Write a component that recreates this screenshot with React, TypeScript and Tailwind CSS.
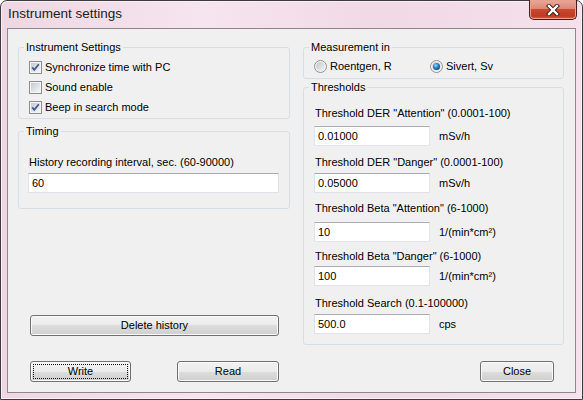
import { useId, type ReactNode } from "react";

function useSvgId() {
  return "g" + useId().replace(/[^a-zA-Z0-9]/g, "");
}

function CheckBox({ checked }: { checked?: boolean }) {
  const id = useSvgId();
  return (
    <svg width="13" height="13" viewBox="0 0 13 13" className="shrink-0">
      <defs>
        <linearGradient id={id} x1="0" y1="0" x2="1" y2="1">
          <stop offset="0" stopColor="#c6cad0" />
          <stop offset="1" stopColor="#f6f6f6" />
        </linearGradient>
      </defs>
      <rect x="0.5" y="0.5" width="12" height="12" fill="#f4f4f4" stroke="#8e8f8f" />
      <rect x="2" y="2" width="9" height="9" fill={`url(#${id})`} />
      {checked && (
        <path d="M3.2 6.3 5.3 8.8 9.8 3.2" fill="none" stroke="#44598f" strokeWidth="1.8" />
      )}
    </svg>
  );
}

function Radio({ checked }: { checked?: boolean }) {
  const id = useSvgId();
  return (
    <svg width="13" height="13" viewBox="0 0 13 13" className="shrink-0">
      <defs>
        <linearGradient id={id + "a"} x1="0" y1="0" x2="1" y2="1">
          <stop offset="0" stopColor="#c3c7cc" />
          <stop offset="1" stopColor="#f4f4f4" />
        </linearGradient>
        <radialGradient id={id + "b"} cx="0.4" cy="0.35" r="0.7">
          <stop offset="0" stopColor="#9fe0fb" />
          <stop offset="0.45" stopColor="#2c8fd0" />
          <stop offset="1" stopColor="#0d3f73" />
        </radialGradient>
      </defs>
      <circle cx="6.5" cy="6.5" r="6" fill="#f4f4f4" stroke="#8e8f8f" />
      <circle cx="6.5" cy="6.5" r="4.5" fill={`url(#${id}a)`} />
      {checked && <circle cx="6.5" cy="6.5" r="3.5" fill={`url(#${id}b)`} />}
    </svg>
  );
}

function Group({ title, className, children }: { title: string; className: string; children?: ReactNode }) {
  return (
    <fieldset className={"border border-[#d5dfe5] rounded-[3px] " + className}>
      <legend className="ml-[5px] px-[2px] leading-[13px]">{title}</legend>
      {children}
    </fieldset>
  );
}

function TextBox({ value, className }: { value: string; className: string }) {
  return (
    <div className={"h-[20px] bg-white border border-[#dfe2e8] border-t-[#abadb3] px-[3px] flex items-center " + className}>
      {value}
    </div>
  );
}

function WinButton({ label, className, focused }: { label: string; className: string; focused?: boolean }) {
  return (
    <div
      className={
        "h-[21px] rounded-[3px] border border-[#707070] p-[2px] bg-[linear-gradient(#f2f2f2_0%,#ebebeb_50%,#dddddd_50%,#cfcfcf_100%)] shadow-[inset_0_0_0_1px_#fbfbfb] " +
        className
      }
    >
      <div
        className={
          "h-full flex items-center justify-center border border-dotted " +
          (focused ? "border-[#111]" : "border-transparent")
        }
      >
        {label}
      </div>
    </div>
  );
}

const thresholds = [
  { label: 'Threshold DER "Attention" (0.0001-100)', value: "0.01000", unit: "mSv/h", lm: "mt-[13px]", im: "mt-[6px]" },
  { label: 'Threshold DER "Danger" (0.0001-100)', value: "0.05000", unit: "mSv/h", lm: "mt-[10px]", im: "mt-[4px]" },
  { label: 'Threshold Beta "Attention" (6-1000)', value: "10", unit: "1/(min*cm²)", lm: "mt-[9px]", im: "mt-[7px]" },
  { label: 'Threshold Beta "Danger" (6-1000)', value: "100", unit: "1/(min*cm²)", lm: "mt-[8px]", im: "mt-[3px]" },
  { label: "Threshold Search (0.1-100000)", value: "500.0", unit: "cps", lm: "mt-[11px]", im: "mt-[4px]" },
];

export default function App() {
  return (
    <div className="w-[583px] h-[400px] bg-white text-[11px] text-black font-['Liberation_Sans',Arial,sans-serif]">
      <div className="w-full h-full flex flex-col rounded-t-[7px] border border-[#3f3a3d] bg-[linear-gradient(90deg,#eed7e3,#f6e4ee_35%,#f1d9e6_65%,#f5e0ec)] shadow-[inset_0_0_0_1px_#fbeff6]">
        {/* title bar */}
        <div className="h-[27px] flex items-start">
          <div className="mt-[3px] ml-[7px] text-[13.5px] leading-[20px] text-[#1c1c1c]">Instrument settings</div>
          <div className="ml-auto mr-[5px] -mt-[1px] w-[48px] h-[20px] rounded-b-[5px] border border-t-0 border-[#4a1d14] bg-[linear-gradient(#eaa99a_0%,#de8775_45%,#c84830_50%,#c03a22_85%,#d8684e_100%)] flex items-center justify-center shadow-[inset_0_0_0_1px_#e9a08e]">
            <svg width="14" height="12" viewBox="0 0 14 12">
              <path d="M3 2 11 10M11 2 3 10" stroke="#3b1610" strokeWidth="4.2" strokeLinecap="square" />
              <path d="M3 2 11 10M11 2 3 10" stroke="#ffffff" strokeWidth="2.4" strokeLinecap="square" />
            </svg>
          </div>
        </div>

        {/* client area */}
        <div className="flex-1 mx-[6px] mb-[6px] border border-[#8f878c] bg-[#f0f0f0] pt-[12px] pl-[10px]">
          <div className="flex gap-[13px]">
            {/* left column */}
            <div className="w-[272px] flex flex-col">
              <Group title="Instrument Settings" className="h-[78px]">
                <div className="mt-[3px] pl-[10px]">
                  <div className="h-[20px] flex items-center gap-[3px]">
                    <CheckBox checked />
                    <span>Synchronize time with PC</span>
                  </div>
                  <div className="h-[20px] flex items-center gap-[3px]">
                    <CheckBox />
                    <span>Sound enable</span>
                  </div>
                  <div className="h-[20px] flex items-center gap-[3px]">
                    <CheckBox checked />
                    <span>Beep in search mode</span>
                  </div>
                </div>
              </Group>
              <Group title="Timing" className="mt-[6px] h-[84px]">
                <div className="mt-[18px] ml-[10px] leading-[13px]">History recording interval, sec. (60-90000)</div>
                <TextBox value="60" className="mt-[4px] ml-[9px] w-[251px]" />
              </Group>
              <WinButton label="Delete history" className="mt-[106px] ml-[12px] w-[249px] h-[21px]" />
            </div>

            {/* right column */}
            <div className="w-[261px] flex flex-col">
              <Group title="Measurement in" className="h-[38px]">
                <div className="mt-[6px] ml-[10px] h-[13px] flex items-center">
                  <div className="w-[116px] flex items-center gap-[3px]">
                    <Radio />
                    <span>Roentgen, R</span>
                  </div>
                  <div className="flex items-center gap-[3px]">
                    <Radio checked />
                    <span>Sivert, Sv</span>
                  </div>
                </div>
              </Group>
              <Group title="Thresholds" className="mt-[2px] h-[264px]">
                {thresholds.map((t) => (
                  <div key={t.label}>
                    <div className={"ml-[11px] leading-[13px] " + t.lm}>{t.label}</div>
                    <div className={"ml-[10px] flex items-center " + t.im}>
                      <TextBox value={t.value} className="w-[116px]" />
                      <span className="ml-[9px]">{t.unit}</span>
                    </div>
                  </div>
                ))}
              </Group>
            </div>
          </div>

          {/* bottom buttons */}
          <div className="flex mt-[16px] ml-[12px]">
            <WinButton label="Write" focused className="w-[101px]" />
            <WinButton label="Read" className="ml-[46px] w-[102px]" />
            <WinButton label="Close" className="ml-[201px] w-[74px]" />
          </div>
        </div>
      </div>
    </div>
  );
}
